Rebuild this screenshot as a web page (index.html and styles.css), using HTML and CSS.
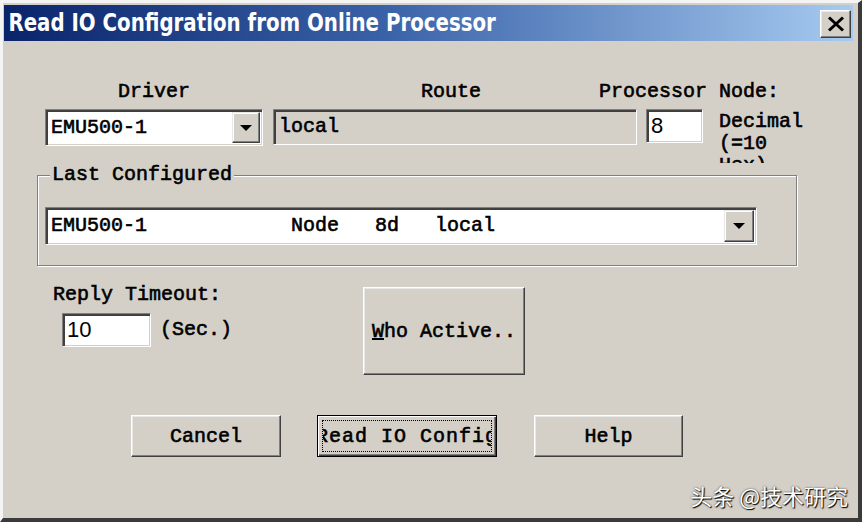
FILE: index.html
```html
<!DOCTYPE html>
<html>
<head>
<meta charset="utf-8">
<title>Read IO Configration from Online Processor</title>
<link rel="stylesheet" href="styles.css">
</head>
<body>
<div class="window">
  <div class="titlebar">
    <span class="title">Read IO Configration from Online Processor</span>
    <button class="close" aria-label="Close">
      <svg width="18" height="16" viewBox="0 0 18 16"><path d="M2 1.5 L16 14.5 M16 1.5 L2 14.5" stroke="#000" stroke-width="3" fill="none"/></svg>
    </button>
  </div>
  <div class="content">
    <div class="labels">
      <span class="lbl-driver">Driver</span>
      <span class="lbl-route">Route</span>
      <span class="lbl-proc">Processor Node:</span>
    </div>
    <div class="fields">
      <div class="combo combo-driver">
        <span class="value">EMU500-1</span>
        <span class="ddbtn"><span class="tri"></span></span>
      </div>
      <div class="field field-route">local</div>
      <div class="field field-proc num">8</div>
      <div class="decimal">Decimal (=10 Hex)</div>
    </div>
    <fieldset class="group">
      <legend>Last Configured</legend>
      <div class="combo combo-wide">
        <span class="value">EMU500-1            Node   8d   local</span>
        <span class="ddbtn ddbtn-wide"><span class="tri"></span></span>
      </div>
    </fieldset>
    <div class="mid">
      <div class="timeout">
        <div class="timeout-label">Reply Timeout:</div>
        <div class="timeout-row">
          <div class="field field-timeout num">10</div>
          <span class="sec">(Sec.)</span>
        </div>
      </div>
      <button class="btn who"><u>W</u>ho Active..</button>
    </div>
    <div class="btn-row">
      <button class="btn cancel">Cancel</button>
      <button class="btn btn-default read"><span class="focus"><span>Read IO Config</span></span></button>
      <button class="btn help">Help</button>
    </div>
  </div>
  <div class="watermark">头条 @技术研究</div>
</div>
</body>
</html>
```
FILE: styles.css
```css
* { box-sizing: border-box; }
html, body { margin: 0; padding: 0; }
body {
  width: 862px;
  height: 522px;
  overflow: hidden;
  background: #d4d0c8;
  font-family: "Liberation Mono", "Courier New", monospace;
  font-weight: normal;
  -webkit-text-stroke: 0.6px #000;
  font-size: 20px;
  color: #000;
}
.window {
  position: relative;
  width: 862px;
  height: 522px;
  background: #d4d0c8;
  border-style: solid;
  border-width: 3px 4px 4px 3px;
  border-color: #f4f4f4 #3a3a3a #3a3a3a #f4f4f4;
  padding: 2px 5px 0 1px;
}
.titlebar {
  height: 36px;
  display: flex;
  align-items: flex-start;
  justify-content: space-between;
  background: linear-gradient(to right, #0a246a 0%, #3a62a8 45%, #a6caf0 100%);
}
.title {
  color: #fff;
  -webkit-text-stroke: 0;
  font-family: "DejaVu Sans", sans-serif;
  font-stretch: condensed;
  font-weight: bold;
  font-size: 25px;
  line-height: 36px;
  padding-left: 5px;
  white-space: nowrap;
  transform: scaleX(0.88);
  transform-origin: left center;
}
.close {
  margin: 5px 2px 0 0;
  width: 31px;
  height: 28px;
  padding: 0;
  background: #d4d0c8;
  border: 1px solid;
  border-color: #fff #404040 #404040 #fff;
  box-shadow: inset -1px -1px #808080, inset 1px 1px #e8e8e8;
  display: flex;
  align-items: center;
  justify-content: center;
}
.labels {
  display: flex;
  margin-top: 41px;
  height: 20px;
  line-height: 20px;
}
.lbl-driver { margin-left: 41px; width: 218px; text-align: center; }
.lbl-route { margin-left: 10px; width: 326px; padding-left: 30px; text-align: center; }
.lbl-proc { white-space: pre; }
.fields {
  display: flex;
  align-items: flex-start;
  margin-top: 7px;
  height: 37px;
}
.combo, .field {
  display: flex;
  align-items: center;
  border: 1px solid;
  border-color: #808080 #fff #fff #808080;
  box-shadow: inset 2px 2px #404040, inset -1px -1px #d4d0c8;
}
.combo { background: #fff; }
.combo .value {
  flex: 1;
  padding-left: 5px;
  white-space: pre;
  line-height: 20px;
}
.combo-driver { margin-left: 41px; width: 218px; height: 37px; }
.ddbtn {
  width: 28px;
  height: 31px;
  margin-right: 2px;
  background: #d4d0c8;
  border: 1px solid;
  border-color: #e8e8e8 #404040 #404040 #e8e8e8;
  box-shadow: inset -1px -1px #808080, inset 1px 1px #fff;
  display: flex;
  align-items: center;
  justify-content: center;
}
.ddbtn-wide { width: 30px; height: 32px; }
.tri {
  width: 0;
  height: 0;
  border-left: 6px solid transparent;
  border-right: 6px solid transparent;
  border-top: 6px solid #000;
}
.field { padding-left: 5px; line-height: 20px; }
.field-route { margin-left: 10px; width: 364px; height: 36px; background: #d4d0c8; }
.field-proc { margin-left: 9px; width: 57px; height: 34px; background: #fff; }
.num {
  font-family: "Liberation Sans", Arial, sans-serif;
  -webkit-text-stroke: 0;
  font-weight: normal;
  font-size: 22px;
  padding-left: 4px;
}
.decimal {
  margin-left: 16px;
  margin-top: 2px;
  width: 90px;
  height: 52px;
  overflow: hidden;
  line-height: 22px;
}
.group {
  margin: 19px 0 0 33px;
  width: 760px;
  min-width: 0;
  border: 1px solid #808080;
  box-shadow: inset 1px 1px #fff, 1px 1px #fff;
  padding: 0 0 20px 7px;
}
.group legend {
  margin-left: 5px;
  padding: 0 2px;
  line-height: 20px;
  background: #d4d0c8;
}
.combo-wide { margin-top: 22px; width: 712px; height: 38px; }
.mid {
  display: flex;
  align-items: flex-start;
  margin-top: 19px;
}
.timeout { width: 310px; margin-left: 49px; }
.timeout-label { line-height: 20px; }
.timeout-row {
  display: flex;
  align-items: center;
  margin-top: 8px;
  margin-left: 9px;
}
.field-timeout { width: 89px; height: 34px; background: #fff; }
.sec { margin-left: 9px; line-height: 20px; }
.btn {
  font: inherit;
  color: #000;
  padding: 0;
  background: #d4d0c8;
  border: 1px solid;
  border-color: #fff #404040 #404040 #fff;
  box-shadow: inset -1px -1px #808080, inset 1px 1px #e8e8e8;
  display: flex;
  align-items: center;
  justify-content: center;
  white-space: nowrap;
}
.who { width: 162px; height: 88px; margin-top: 2px; }
.btn-row {
  display: flex;
  margin-top: 40px;
  padding-left: 127px;
}
.cancel { width: 150px; height: 42px; }
.read { width: 180px; height: 42px; margin-left: 36px; }
.help { width: 149px; height: 42px; margin-left: 37px; }
.btn-default {
  border: 1px solid #000;
  box-shadow: inset 1px 1px #fff, inset -1px -1px #404040, inset -2px -2px #808080;
}
.focus {
  flex: 1;
  align-self: stretch;
  margin: 4px;
  border: 1px dotted #000;
  overflow: hidden;
  display: flex;
  align-items: center;
  justify-content: center;
  letter-spacing: 1px;
}
.watermark {
  position: absolute;
  right: 10px;
  bottom: 8px;
  line-height: 30px;
  font-family: "Noto Sans CJK SC", sans-serif;
  -webkit-text-stroke: 0;
  font-weight: normal;
  font-size: 22px;
  color: #fff;
  text-shadow: 1px 1px 1px #000, 0 0 2px rgba(0,0,0,0.7);
  white-space: nowrap;
}
```
